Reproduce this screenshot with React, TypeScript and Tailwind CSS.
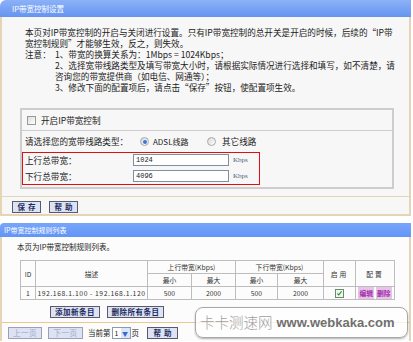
const Btn = ({ children, w, disabled, wide }: { children: React.ReactNode; w: string; disabled?: boolean; wide?: boolean }) => (
    <span className={`${w} h-[12px] flex items-center justify-center border bg-[#dde3f4] text-[7.5px] leading-none font-bold ${wide ? "tracking-[3px] pl-[3px]" : "tracking-[0.5px]"} ${disabled ? "text-[#b4bcd4] border-[#9aa0b8]" : "text-[#1c2a5c] border-[#5a5a6a]"}`}>
        {children}
    </span>
)

const Radio = ({ on }: { on?: boolean }) => (
    <span className="w-[9px] h-[9px] rounded-full border border-[#a8a8a8] bg-gradient-to-br from-[#d8d8d8] to-white flex items-center justify-center">
        {on && <span className="w-[4px] h-[4px] rounded-full bg-[#3a78d8]" />}
    </span>
)

const Td = ({ children, className = "", colSpan, rowSpan }: { children?: React.ReactNode; className?: string; colSpan?: number; rowSpan?: number }) => (
    <td colSpan={colSpan} rowSpan={rowSpan} className={`border border-[#bdbdbd] text-center p-0 leading-[12px] ${className}`}>{children}</td>
)

export default function App() {
    return (
        <div className="relative w-[413px] h-[342px] overflow-hidden bg-white font-['Noto_Sans_CJK_SC',sans-serif] text-[#222]">
            {/* IP带宽控制设置 */}
            <div className="w-[411px]">
                <div className="h-[17px] rounded-tl-[6px] bg-gradient-to-b from-[#8cb1f7] to-[#6594f0] pl-[12px] text-[7.5px] leading-[17px] text-white">IP带宽控制设置</div>
                <div className="border-x-2 border-b-2 border-[#e4d5b5] bg-[#f7f7f7]">
                    <div className="pl-[23px] pt-[10px] text-[8.6px] leading-[11px] whitespace-nowrap">
                        <div>本页对IP带宽控制的开启与关闭进行设置。只有IP带宽控制的总开关是开启的时候，后续的“IP带</div>
                        <div>宽控制规则”才能够生效，反之，则失效。</div>
                        <div className="flex">
                            <span className="w-[30px]">注意：</span>
                            <div>
                                <div>1、带宽的换算关系为：1Mbps = 1024Kbps；</div>
                                <div>2、选择宽带线路类型及填写带宽大小时，请根据实际情况进行选择和填写，如不清楚，请</div>
                                <div>咨询您的带宽提供商（如电信、网通等）；</div>
                                <div>3、修改下面的配置项后，请点击“保存”按钮，使配置项生效。</div>
                            </div>
                        </div>
                    </div>

                    <div className="ml-[18px] mt-[15px] w-[374px] border-2 border-[#cdcdcd] text-[8.6px]">
                        <div className="h-[21px] flex items-center pl-[5px] border-b border-[#cdcdcd]">
                            <span className="w-[9px] h-[9px] border border-[#9a9a9a] bg-gradient-to-br from-[#dcdcdc] to-white" />
                            <span className="ml-[5px]">开启IP带宽控制</span>
                        </div>
                        <div className="h-[21px] flex items-center pl-[3px]">
                            <span className="w-[115px]">请选择您的宽带线路类型：</span>
                            <Radio on />
                            <span className="ml-[4px] w-[54px] text-[8px]">ADSL线路</span>
                            <Radio />
                            <span className="ml-[6px]">其它线路</span>
                        </div>
                        <div className="w-[238px] border border-[#e01010] pt-[1px] pb-[2px] flex flex-col gap-[4px]">
                            {[["上行总带宽：", "1024"], ["下行总带宽：", "4096"]].map(([l, v]) => (
                                <div key={l} className="flex items-center h-[12px] pl-[2px]">
                                    <span className="w-[108px]">{l}</span>
                                    <span className="w-[96px] h-[12px] border border-[#7f8fa0] bg-white pl-[2px] text-[7px] leading-[10px] font-['Liberation_Mono',monospace]">{v}</span>
                                    <span className="ml-[4px] text-[7px] text-[#4a5c78] font-['Liberation_Serif',serif]">Kbps</span>
                                </div>
                            ))}
                        </div>
                        <div className="h-[2px]" />
                    </div>

                    <div className="mt-[7px] border-t border-[#e4d5b5] pt-[4px] pb-[1px] pl-[10px] flex gap-[8px]">
                        <Btn w="w-[29px]" wide>保存</Btn>
                        <Btn w="w-[29px]" wide>帮助</Btn>
                    </div>
                </div>
            </div>

            {/* IP带宽控制规则列表 */}
            <div className="mt-[7px] w-[411px]">
                <div className="h-[14px] rounded-tl-[4px] bg-gradient-to-b from-[#78a6fb] to-[#6294f6] pl-[4px] text-[7px] leading-[14px] text-white">IP带宽控制规则列表</div>
                <div className="border-x-2 border-[#e4d5b5] bg-[#fcfcfc] h-[104px]">
                    <div className="pl-[15px] pt-[4px] text-[7.5px] leading-[11px]">本页为IP带宽控制规则列表。</div>
                    <table className="ml-[18px] mt-[8px] w-[374px] table-fixed border-collapse text-[6.8px] text-[#333]">
                        <colgroup>
                            <col className="w-[15px]" />
                            <col className="w-[112px]" />
                            <col className="w-[44px]" />
                            <col className="w-[44px]" />
                            <col className="w-[42px]" />
                            <col className="w-[46px]" />
                            <col className="w-[32px]" />
                            <col className="w-[39px]" />
                        </colgroup>
                        <tbody>
                            <tr className="h-[13px]">
                                <Td rowSpan={2}>ID</Td>
                                <Td rowSpan={2}>描述</Td>
                                <Td colSpan={2}>上行带宽(Kbps)</Td>
                                <Td colSpan={2}>下行带宽(Kbps)</Td>
                                <Td rowSpan={2} className="tracking-[2px]">启用</Td>
                                <Td rowSpan={2} className="tracking-[2px]">配置</Td>
                            </tr>
                            <tr className="h-[13px]">
                                <Td>最小</Td>
                                <Td>最大</Td>
                                <Td>最小</Td>
                                <Td>最大</Td>
                            </tr>
                            <tr className="h-[13px]">
                                <Td>1</Td>
                                <Td className="whitespace-nowrap tracking-[0.55px]">192.168.1.100 - 192.168.1.120</Td>
                                <Td>500</Td>
                                <Td>2000</Td>
                                <Td>500</Td>
                                <Td>2000</Td>
                                <Td>
                                    <span className="mx-auto w-[9px] h-[9px] border border-[#6a8a6a] bg-[#eef6ee] flex items-center justify-center">
                                        <svg viewBox="0 0 10 10" className="w-[7px] h-[7px]"><path d="M2 5l2 2 4-5" fill="none" stroke="#2a9a2a" strokeWidth="1.6" /></svg>
                                    </span>
                                </Td>
                                <Td>
                                    <span className="inline-flex gap-[2px] font-bold text-[#a030a8]">
                                        <span className="bg-[#e7c3ea] px-[1px]">编辑</span>
                                        <span className="bg-[#e7c3ea] px-[1px]">删除</span>
                                    </span>
                                </Td>
                            </tr>
                        </tbody>
                    </table>
                    <div className="mt-[6px] pl-[48px] flex gap-[7px]">
                        <Btn w="w-[50px]">添加新条目</Btn>
                        <Btn w="w-[57px]">删除所有条目</Btn>
                    </div>
                    <div className="mt-[4px] border-t border-[#ecc890] pt-[4px] pl-[6px] flex items-center text-[7.5px]">
                        <Btn w="w-[34px]" disabled>上一页</Btn>
                        <span className="ml-[6px]"><Btn w="w-[35px]" disabled>下一页</Btn></span>
                        <span className="ml-[5px]">当前第</span>
                        <span className="ml-[1px] w-[19px] h-[12px] border border-[#8a9ab0] bg-white flex items-center">
                            <span className="flex-1 pl-[2px] text-[7px]">1</span>
                            <span className="w-[9px] h-full bg-[#dbe6f8] text-[#3a6ad0] text-[6px] flex items-center justify-center">▼</span>
                        </span>
                        <span className="ml-[1px]">页</span>
                        <span className="ml-[8px]"><Btn w="w-[31px]" wide>帮助</Btn></span>
                    </div>
                </div>
            </div>

            {/* watermark */}
            <div className="absolute left-[195px] top-[307px] w-[213px] h-[31px] rounded-[8px] border border-[#a8a8a8] bg-white/75 shadow-[0_1px_2px_rgba(0,0,0,0.3)] flex items-center pl-[4px] whitespace-nowrap">
                <span className="text-[14.5px] text-[#a0a0a0] font-light leading-none">卡卡测速网</span>
                <span className="ml-[4px] text-[13px] text-[#707070] font-bold leading-none font-['Liberation_Sans',sans-serif]">www.webkaka.com</span>
            </div>
        </div>
    )
}
